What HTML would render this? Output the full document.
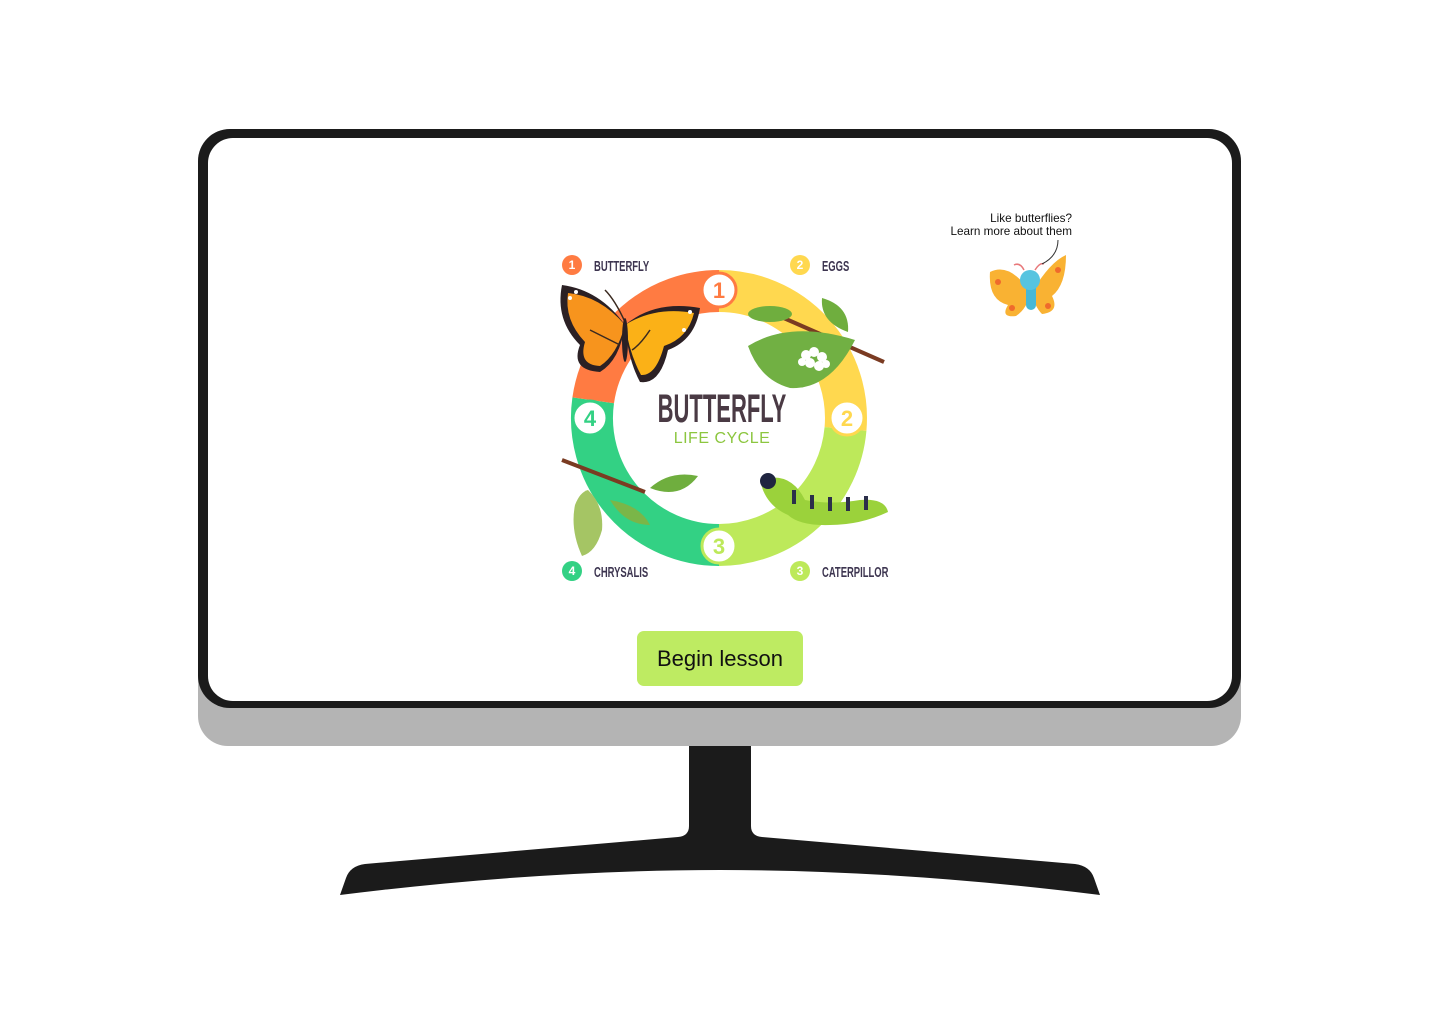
<!DOCTYPE html>
<html><head><meta charset="utf-8"><style>
html,body{margin:0;padding:0;background:#fff;width:1440px;height:1024px;overflow:hidden}
svg{display:block}
.btn{position:absolute;left:637px;top:631px;width:166px;height:55px;background:#beeb62;border-radius:7px;font:22px "Liberation Sans",sans-serif;color:#111;display:flex;align-items:center;justify-content:center}
</style></head><body>
<svg width="1440" height="1024" viewBox="0 0 1440 1024" style="position:absolute;left:0;top:0">
<rect x="198" y="600" width="1043" height="146" rx="30" fill="#b4b4b4"/>
<rect x="198" y="129" width="1043" height="579" rx="32" fill="#1b1b1b"/>
<rect x="208" y="138" width="1024" height="563" rx="25" fill="#fff"/>
<path d="M689 746 H751 V826 Q751 836 762 837 L1075 864 Q1090 866 1094 878 L1100 895 Q900 870 720 870 Q540 870 340 895 L346 878 Q350 866 365 864 L678 837 Q689 836 689 826 Z" fill="#1b1b1b"/>
<g fill="none" stroke-width="42">
<path d="M719 291 A127 127 0 0 1 845.5 429" stroke="#ffd84f"/>
<path d="M845.5 429 A127 127 0 0 1 719 545" stroke="#bde95a"/>
<path d="M719 545 A127 127 0 0 1 593.2 400.3" stroke="#33d184"/>
<path d="M593.2 400.3 A127 127 0 0 1 719 291" stroke="#ff7b42"/>
</g>
<g font-family="Liberation Sans,sans-serif" font-weight="bold" font-size="22" text-anchor="middle">
<circle cx="719" cy="290" r="17" fill="#fff" stroke="#ff7b42" stroke-width="3"/><text x="719" y="298" fill="#ff7b42">1</text>
<circle cx="847" cy="418" r="17" fill="#fff" stroke="#ffd84f" stroke-width="3"/><text x="847" y="426" fill="#ffd84f">2</text>
<circle cx="719" cy="546" r="17" fill="#fff" stroke="#bde95a" stroke-width="3"/><text x="719" y="554" fill="#bde95a">3</text>
<circle cx="590" cy="418" r="17" fill="#fff" stroke="#33d184" stroke-width="3"/><text x="590" y="426" fill="#33d184">4</text>
</g>
<g font-family="Liberation Sans,sans-serif" font-weight="bold" font-size="12" text-anchor="middle" fill="#fff">
<circle cx="572" cy="265" r="10" fill="#ff7b42"/><text x="572" y="269">1</text>
<circle cx="800" cy="265" r="10" fill="#ffd84f"/><text x="800" y="269">2</text>
<circle cx="800" cy="571" r="10" fill="#bde95a"/><text x="800" y="575">3</text>
<circle cx="572" cy="571" r="10" fill="#33d184"/><text x="572" y="575">4</text>
</g>
<g font-family="Liberation Sans,sans-serif" font-weight="bold" font-size="15" fill="#3d3550">
<text transform="translate(594 271) scale(0.63 1)">BUTTERFLY</text>
<text transform="translate(822 271) scale(0.63 1)">EGGS</text>
<text transform="translate(822 577) scale(0.63 1)">CATERPILLOR</text>
<text transform="translate(594 577) scale(0.63 1)">CHRYSALIS</text>
</g>
<text transform="translate(722 422) scale(0.55 1)" text-anchor="middle" font-family="Liberation Sans,sans-serif" font-weight="bold" font-size="40" fill="#4a3a44">BUTTERFLY</text>
<text x="722" y="443" text-anchor="middle" font-family="Liberation Sans,sans-serif" font-size="16" fill="#8cc63f" letter-spacing="0.5">LIFE CYCLE</text>
<path d="M770 312 L884 362" stroke="#7a3b22" stroke-width="4"/>
<ellipse cx="770" cy="314" rx="22" ry="8" fill="#6fae3e"/>
<path d="M822 298 Q850 306 848 332 Q820 322 822 298Z" fill="#6fae3e"/>
<path d="M748 346 Q790 320 855 340 Q830 390 790 388 Q760 380 748 346Z" fill="#71b043"/>
<g fill="#fff"><circle cx="806" cy="355" r="5"/><circle cx="814" cy="352" r="5"/><circle cx="822" cy="357" r="5"/><circle cx="810" cy="363" r="5"/><circle cx="819" cy="366" r="5"/><circle cx="802" cy="362" r="4"/><circle cx="826" cy="364" r="4"/></g>
<g>
<path d="M625 325 Q600 290 562 285 Q555 320 580 345 Q570 370 600 372 Q620 360 625 325Z" fill="#2b2024"/>
<path d="M625 325 Q600 296 568 293 Q564 320 585 342 Q578 365 600 366 Q617 355 625 325Z" fill="#f7941d"/>
<path d="M625 325 Q655 300 700 308 Q695 340 668 350 Q660 385 640 382 Q628 360 625 325Z" fill="#2b2024"/>
<path d="M625 325 Q655 306 694 313 Q688 338 664 346 Q656 376 641 375 Q630 355 625 325Z" fill="#fbb117"/>
<g fill="#fff"><circle cx="570" cy="298" r="2"/><circle cx="576" cy="292" r="2"/><circle cx="690" cy="312" r="2"/><circle cx="684" cy="330" r="2"/></g>
<path d="M590 330 Q610 340 620 345 M650 330 Q640 345 632 350 M625 322 Q615 300 605 290" stroke="#3a2a20" stroke-width="1.5" fill="none"/>
<ellipse cx="625" cy="340" rx="3" ry="22" fill="#2b2024"/>
</g>
<g>
<path d="M760 480 Q790 470 805 500 Q830 505 860 500 Q885 498 888 512 Q860 525 830 525 Q800 526 788 515 Q765 505 760 480Z" fill="#9bd23b"/>
<g fill="#2b2f4a"><rect x="792" y="490" width="4" height="14"/><rect x="810" y="495" width="4" height="14"/><rect x="828" y="497" width="4" height="14"/><rect x="846" y="497" width="4" height="14"/><rect x="864" y="496" width="4" height="14"/></g>
<circle cx="768" cy="481" r="8" fill="#1f2540"/>
</g>
<path d="M562 460 L645 492" stroke="#7a3b22" stroke-width="4"/>
<path d="M650 488 Q670 470 698 476 Q680 500 650 488Z" fill="#6fae3e"/>
<path d="M610 500 Q640 505 650 525 Q625 525 610 500Z" fill="#7ab648"/>
<path d="M588 490 Q604 505 602 530 Q596 552 582 556 Q570 530 575 505 Q580 492 588 490Z" fill="#a5c564"/>
<path d="M1030 292 Q1010 262 990 272 Q988 300 1008 305 Q1000 318 1016 316 Q1028 308 1030 292Z" fill="#f9b233"/>
<path d="M1032 292 Q1050 262 1066 255 Q1066 285 1052 296 Q1060 312 1042 314 Q1034 306 1032 292Z" fill="#f9b233"/>
<g fill="#ef6a2c"><circle cx="998" cy="282" r="3"/><circle cx="1012" cy="308" r="3"/><circle cx="1058" cy="270" r="3"/><circle cx="1048" cy="306" r="3"/></g>
<rect x="1026" y="282" width="10" height="28" rx="5" fill="#47b8d6"/>
<circle cx="1030" cy="280" r="10" fill="#56c4e0"/>
<path d="M1024 270 Q1020 262 1014 265 M1035 270 Q1040 262 1044 264" stroke="#e8787a" stroke-width="1.5" fill="none"/>
<path d="M1042 264 Q1058 256 1058 240" stroke="#333" stroke-width="1" fill="none"/>
<g font-family="Liberation Sans,sans-serif" font-size="11.7" fill="#111" text-anchor="end">
<text x="1072" y="222">Like butterflies?</text>
<text x="1072" y="235">Learn more about them</text>
</g>
</svg>
<div class="btn">Begin lesson</div>
</body></html>
